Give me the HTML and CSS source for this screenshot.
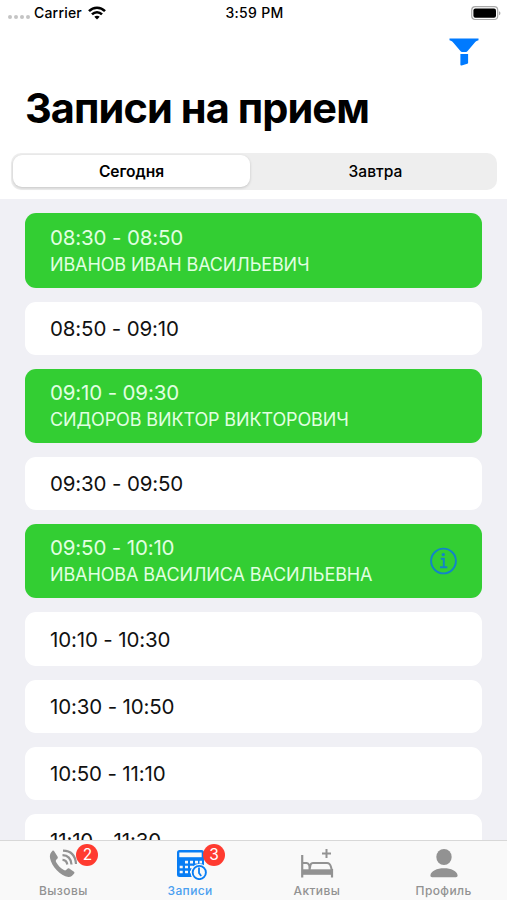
FILE: index.html
```html
<!DOCTYPE html>
<html lang="ru">
<head>
<meta charset="utf-8">
<title>Записи на прием</title>
<link rel="stylesheet" href="styles.css">
</head>
<body>
<div class="app">
  <header class="header">
    <div class="status">
      <div class="carrier">
        <span class="dots"><i></i><i></i><i></i><i></i></span>
        <span class="carrier-name">Carrier</span>
        <svg class="wifi" width="18" height="14" viewBox="0 0 18 14" fill="none" stroke="#000" stroke-width="2.5">
          <path d="M1 5.1C5.4.5 12.6.5 17 5.1"/>
          <path d="M4 8.4c2.8-2.9 7.2-2.9 10 0"/>
          <path d="M6.3 10.8c1.5-1.5 3.9-1.5 5.4 0L9 13.6z" fill="#000" stroke="none"/>
        </svg>
      </div>
      <time class="clock">3:59 PM</time>
      <svg class="battery" width="30" height="15" viewBox="0 0 30 15">
        <rect x=".7" y=".7" width="26" height="12.8" rx="3.5" fill="#fff" stroke="#a9a9a9" stroke-width="1.2"/>
        <rect x="2.4" y="2.4" width="22.6" height="9.4" rx="2" fill="#000"/>
        <path d="M28.2 5.2c1.6.7 1.6 3.3 0 4z" fill="#999"/>
      </svg>
    </div>
    <div class="nav">
      <svg class="filter" width="30" height="28" viewBox="0 0 30 28" fill="#007aff">
        <path d="M.5.5h29v1.700c-2 .4-2.900 1.300-4.100 2.700L18.600 13c-.7.800-1.100 1-2 1h-3.200c-.9 0-1.300-.2-2-1L4.600 4.900C3.400 3.500 2.500 2.600.5 2.200z"/>
        <path d="M11.400 16h7.700v8.500c0 .7-.2 1-.8 1.200l-5.700 1.700c-.8.200-1.200-.1-1.200-.9z"/>
      </svg>
    </div>
    <h1 class="title">Записи на прием</h1>
    <div class="segments">
      <div class="segment active">Сегодня</div>
      <div class="segment">Завтра</div>
    </div>
  </header>
  <main class="list">
    <div class="card booked"><div><div class="time">08:30 - 08:50</div><div class="name">ИВАНОВ ИВАН ВАСИЛЬЕВИЧ</div></div></div>
    <div class="card"><div class="time">08:50 - 09:10</div></div>
    <div class="card booked"><div><div class="time">09:10 - 09:30</div><div class="name">СИДОРОВ ВИКТОР ВИКТОРОВИЧ</div></div></div>
    <div class="card"><div class="time">09:30 - 09:50</div></div>
    <div class="card booked"><div><div class="time">09:50 - 10:10</div><div class="name">ИВАНОВА ВАСИЛИСА ВАСИЛЬЕВНА</div></div>
      <svg class="info" width="28" height="28" viewBox="0 0 28 28" fill="none" stroke="#1284c8" stroke-width="1.9">
        <circle cx="14.5" cy="14" r="12.4"/>
        <path d="M11.800 11.800h3v8.200M11 20.300h7.300"/>
        <circle cx="14.300" cy="7.600" r="1.700" fill="#1284c8" stroke="none"/>
      </svg>
    </div>
    <div class="card"><div class="time">10:10 - 10:30</div></div>
    <div class="card"><div class="time">10:30 - 10:50</div></div>
    <div class="card"><div class="time">10:50 - 11:10</div></div>
    <div class="card"><div class="time">11:10 - 11:30</div></div>
  </main>
  <nav class="tabs">
    <div class="tab">
      <div class="icon">
        <svg width="32" height="32" viewBox="-1 0 32 32" fill="#929292">
          <path d="M6.200 3.300 9.500 8.500c.6 1 .4 1.800-.5 2.600-1.300 1.200-1.500 1.900-.8 3.200 1.800 3.300 4.400 5.900 7.700 7.700 1.200.7 2 .5 3-.7.900-1 1.700-1.200 2.700-.6l4 2.700c1 .6 1.100 1.400.5 2.200-1.400 2-3.400 3.700-5.800 3.400C12.500 27.600 3.600 18.700 2 10 1.500 7.200 2.400 4.700 4.300 3c.8-.6 1.400-.5 1.900.3z"/>
          <g fill="none" stroke="#929292" stroke-width="2.2"><path d="M14.500 11.800q4.200.2 4.800 4.700"/><path d="M14.500 7.200q8.200.3 9 9.300"/><path d="M15 2.700q12 .2 13 13.300"/></g>
        </svg>
        <span class="badge">2</span>
      </div>
      <span class="label">Вызовы</span>
    </div>
    <div class="tab selected">
      <div class="icon">
        <svg width="34" height="32" viewBox="0 0 34 32">
          <rect x="4" y="2" width="27" height="27" rx="2.500" fill="#087df4"/>
          <rect x="6.300" y="4.500" width="22.400" height="4.700" fill="#f8f8f8"/>
          <path fill="#f8f8f8" d="M12 12.800h3v2.600h-3zM17 12.800h3v2.600h-3zM22 12.800h3v2.600h-3zM26.500 12.800h2.500v2.600h-2.500zM6.700 17.700h3v2.600h-3zM12 17.700h3v2.600h-3zM17 17.700h3v2.600h-3zM6.700 22.700h3v2.600h-3zM12 22.700h3v2.600h-3zM17 22.700h3v2.600h-3z"/>
          <circle cx="26.300" cy="24.500" r="8.800" fill="#f8f8f8"/>
          <circle cx="26.300" cy="24.500" r="6.600" fill="#f8f8f8" stroke="#087df4" stroke-width="1.900"/>
          <path d="M26 19.500v5.500l2.200 3" fill="none" stroke="#087df4" stroke-width="1.800"/>
        </svg>
        <span class="badge badge-wide">3</span>
      </div>
      <span class="label">Записи</span>
    </div>
    <div class="tab">
      <div class="icon">
        <svg width="34" height="32" viewBox="0 0 34 32" fill="none" stroke="#929292" stroke-width="2">
          <path d="M26.500 1v9M22 5.500h9"/>
          <path d="M2.200 7v22.500" stroke-width="2.200"/>
          <path d="M3 15h3.500q3 .5 3 4.500v2.500M9.500 22l1-5q.5-2 2.500-2H27q3 0 4 4l.8 3"/>
          <path d="M2 21.300h30v5.500H2z" fill="#929292" stroke="none"/>
          <path d="M32 21v8.500" stroke-width="2.200"/>
        </svg>
      </div>
      <span class="label">Активы</span>
    </div>
    <div class="tab">
      <div class="icon">
        <svg width="32" height="32" viewBox="0 0 32 32" fill="#929292">
          <ellipse cx="16" cy="9" rx="7.700" ry="8.100"/>
          <path d="M2.400 27.500C2.800 23 9 20.300 16 20.300S29.200 23 29.600 27.500c0 1.300-.7 1.700-1.800 1.700H4.200c-1.100 0-1.800-.4-1.800-1.700z"/>
        </svg>
      </div>
      <span class="label">Профиль</span>
    </div>
  </nav>
</div>
</body>
</html>
```
FILE: styles.css
```css
* { box-sizing: border-box; }
body { margin: 0; font-family: Inter, "Liberation Sans", sans-serif; color: #000; font-feature-settings: "calt" 0; }
.app { height: 900px; display: flex; flex-direction: column; overflow: hidden; background: #f0f0f5; }
.header { flex: none; height: 199px; background: #fff; }
.status { height: 26px; display: grid; grid-template-columns: 1fr auto 1fr; align-items: center; padding: 0 6px 0 8px; font-size: 14px; font-weight: 500; }
.carrier { display: flex; align-items: center; }
.carrier-name { letter-spacing: .2px; }
.carrier-name, .clock { padding-bottom: 1px; }
.dots { display: flex; gap: 2px; margin: 8px 4px 0 0; }
.dots i { width: 4px; height: 4px; border-radius: 50%; background: #c4c4c4; }
.wifi { margin-left: 6px; }
.clock { letter-spacing: .3px; }
.battery { justify-self: end; }
.nav { height: 52px; display: flex; justify-content: flex-end; padding: 12px 28px 0 0; }
.title { margin: 0; padding-left: 25px; height: 74px; line-height: 61px; font-size: 41.500px; font-weight: 700; letter-spacing: -0.93px; white-space: nowrap; }
.segments { display: flex; height: 37px; margin: 1px 10px 0 11px; padding: 2px; border-radius: 10px; background: #eee; }
.segment { flex: 1; display: flex; align-items: center; justify-content: center; padding: 0 0 1px 6px; font-size: 15.600px; font-weight: 500; border-radius: 9px; }
.active { flex: 0 0 237px; height: 32px; padding: 0; background: #fff; font-weight: 600; letter-spacing: -.05px; box-shadow: 0 1px 3px rgba(0,0,0,.18); }
.list { flex: 1; min-height: 0; overflow: hidden; display: flex; flex-direction: column; gap: 14px; padding: 14.400px 25px 0; }
.card { flex: none; height: 53.200px; border-radius: 11px; background: #fff; padding: 1.400px 25px 0; display: flex; align-items: center; justify-content: space-between; }
.time { font-size: 20.500px; line-height: 28px; letter-spacing: -.15px; color: #111; white-space: nowrap; }
.booked { height: 74.200px; padding-top: .4px; background: #33ce33; }
.booked .time { color: #e1ffe1; }
.name { font-size: 18px; line-height: 26px; letter-spacing: -.12px; color: #e1ffe1; white-space: nowrap; }
.tabs { flex: none; height: 60px; display: grid; grid-template-columns: repeat(4, 1fr); background: #f9f9f9; border-top: 1px solid #d8d8d8; }
.tab { display: flex; flex-direction: column; align-items: center; color: #929292; }
.icon { position: relative; height: 42px; padding-top: 7px; }
.icon svg { display: block; }
.badge { position: absolute; left: 29px; top: 3px; width: 22px; height: 22px; border-radius: 50%; background: #ff3b30; color: #fff; font-size: 15.500px; line-height: 22px; text-align: center; }
.badge-wide { left: 30px; }
.label { font-size: 12px; line-height: 16px; font-weight: 500; letter-spacing: .4px; }
.selected { color: #087df4; }
.selected .label { color: #4a9ff0; }
```
